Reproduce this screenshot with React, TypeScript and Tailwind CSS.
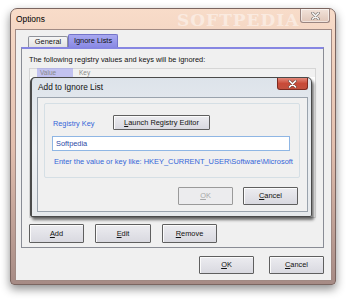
import type { ReactNode } from 'react';

function Key({ children }: { children: ReactNode }) {
  return <span className="underline underline-offset-1">{children}</span>;
}

function CloseGlyph({ color }: { color: string }) {
  return (
    <svg width="9" height="8" viewBox="0 0 9 8">
      <path d="M1.5 1 L7.5 7 M7.5 1 L1.5 7" stroke="#3a3a3a" strokeWidth="3" strokeLinecap="round" opacity="0.55" />
      <path d="M1.5 1 L7.5 7 M7.5 1 L1.5 7" stroke={color} strokeWidth="1.6" strokeLinecap="round" />
    </svg>
  );
}

const btn =
  'flex items-center justify-center border border-[#5f5f5f] bg-gradient-to-b from-[#ececf0] to-[#d9d9e0] shadow-[inset_1px_1px_0_#fbfbfb] text-[7.4px] text-[#111] rounded-[1px]';

export default function App() {
  return (
    <div className="relative h-[301px] w-[350px] overflow-hidden bg-white font-['Liberation_Sans',Arial,sans-serif]">
      <div className="pl-[10px] pt-[8px]">
        {/* main window */}
        <div className="flex h-[277px] w-[326px] flex-col rounded-b-[4px] rounded-t-[7px] border border-[#7a6560] bg-gradient-to-b from-[#f8dcc9] via-[#e3bfae] to-[#a68b85] shadow-[0_4px_10px_rgba(0,0,0,0.45)]">
          <div className="relative flex h-[20px] items-start justify-between pl-[5px] pr-[5px]">
            <span className="text-[8.4px] leading-[20px] text-black">Options</span>
            <span className="absolute left-[166px] top-[1px] font-['DejaVu_Serif',serif] text-[17px] font-bold leading-[20px] tracking-[1px] text-white opacity-45">
              SOFTPEDIA
            </span>
            <div className="relative flex h-[14px] w-[30px] items-center justify-center rounded-b-[3px] border border-t-0 border-[#9a8580] bg-gradient-to-b from-[#f2e3da] to-[#e0c6b8] shadow-[inset_0_0_0_1px_rgba(255,255,255,0.5)]">
              <CloseGlyph color="#f4f4f4" />
            </div>
          </div>

          <div className="ml-[4px] h-[252px] w-[317px] border border-[#a08a84] bg-[#f0f0f0] pl-[5px] pt-[4px]">
            {/* tabs */}
            <div className="flex h-[13px] items-end pl-[7px]">
              <div className="flex h-[11px] w-[40px] items-center justify-center rounded-t-[2px] border border-b-0 border-[#8f929a] bg-gradient-to-b from-[#f6f6f6] to-[#e2e2e2] text-[7.4px] text-[#111]">
                General
              </div>
              <div className="flex h-[13px] w-[50px] items-center justify-center rounded-t-[2px] border border-b-0 border-[#7474c8] bg-gradient-to-b from-[#a8a8f0] to-[#8a8ae4] text-[7.4px] text-[#111]">
                Ignore Lists
              </div>
            </div>
            <div className="flex h-[201px] w-[303px] flex-col border border-t-2 border-[#898c95] border-t-[#8686e2] pl-[7px]">
              <div className="mt-[6px] text-[7.4px] leading-[10px] text-[#111]">
                The following registry values and keys will be ignored:
              </div>
              <div className="mt-[3px] h-[150px] w-[287px] border border-[#d6d6d6] bg-white">
                <div className="flex h-[8px] items-center bg-[#ececec] text-[6.5px] text-[#555] opacity-70">
                  <div className="ml-[7px] w-[36px] bg-[#a9a9ea] pl-[3px]">Value</div>
                  <div className="pl-[6px]">Key</div>
                </div>
              </div>
              <div className="mt-[6px] flex gap-[11px]">
                <div className={`${btn} h-[19px] w-[55px]`}>
                  <Key>A</Key>dd
                </div>
                <div className={`${btn} h-[19px] w-[56px]`}>
                  <Key>E</Key>dit
                </div>
                <div className={`${btn} h-[19px] w-[55px]`}>
                  <Key>R</Key>emove
                </div>
              </div>
            </div>
            <div className="mt-[8px] flex justify-end gap-[15px] pr-[7px]">
              <div className={`${btn} h-[18px] w-[55px]`}>
                <Key>O</Key>K
              </div>
              <div className={`${btn} h-[18px] w-[55px]`}>
                <Key>C</Key>ancel
              </div>
            </div>
          </div>
        </div>
      </div>

      {/* modal dialog over the list */}
      <div className="absolute left-[30px] top-[77px] flex h-[140px] w-[282px] flex-col rounded-t-[5px] rounded-b-[2px] border border-l-2 border-[#4a4a4a] bg-gradient-to-b from-[#dde3ea] via-[#edf0f3] to-[#e6e9ec] shadow-[2px_3px_3px_rgba(0,0,0,0.55)]">
        <div className="flex h-[19px] items-start justify-between pl-[6px] pr-[3px]">
          <span className="text-[8.3px] leading-[18px] text-[#111]">Add to Ignore List</span>
          <div className="flex h-[12px] w-[31px] items-center justify-center rounded-b-[3px] border border-t-0 border-[#7d2a20] bg-gradient-to-b from-[#e4887a] via-[#c84a38] to-[#c2503e]">
            <CloseGlyph color="#ffffff" />
          </div>
        </div>
        <div className="ml-[5px] h-[115px] w-[271px] border border-[#9aa3ad] bg-[#f0f0f0]">
          <div className="ml-[6px] mt-[5px] h-[75px] w-[256px] rounded-[2px] border border-[#d5dfe5]">
            <div className="flex items-center pl-[8px] pt-[11px]">
              <span className="mt-[3px] w-[60px] text-[7.3px] text-[#3466d8]">Registry Key</span>
              <div className={`${btn} h-[15px] w-[97px]`}>
                <Key>L</Key>aunch Registry Editor
              </div>
            </div>
            <div className="ml-[7px] mt-[6px] flex h-[15px] w-[238px] items-center border border-[#8fb6e4] bg-white pl-[3px] text-[7.4px] text-[#2b4aa6]">
              Softpedia
            </div>
            <div className="mt-[6px] pl-[9px] text-[7.45px] leading-[10px] text-[#3466d8]">
              Enter the value or key like: HKEY_CURRENT_USER\Software\Microsoft
            </div>
          </div>
          <div className="mt-[9px] flex justify-end gap-[10px] pr-[9px]">
            <div className="flex h-[18px] w-[55px] items-center justify-center rounded-[1px] border border-[#9a9a9a] bg-[#ececee] text-[7.4px] text-[#a8a8a8]">
              <Key>O</Key>K
            </div>
            <div className={`${btn} h-[18px] w-[55px]`}>
              <Key>C</Key>ancel
            </div>
          </div>
        </div>
      </div>
    </div>
  );
}
